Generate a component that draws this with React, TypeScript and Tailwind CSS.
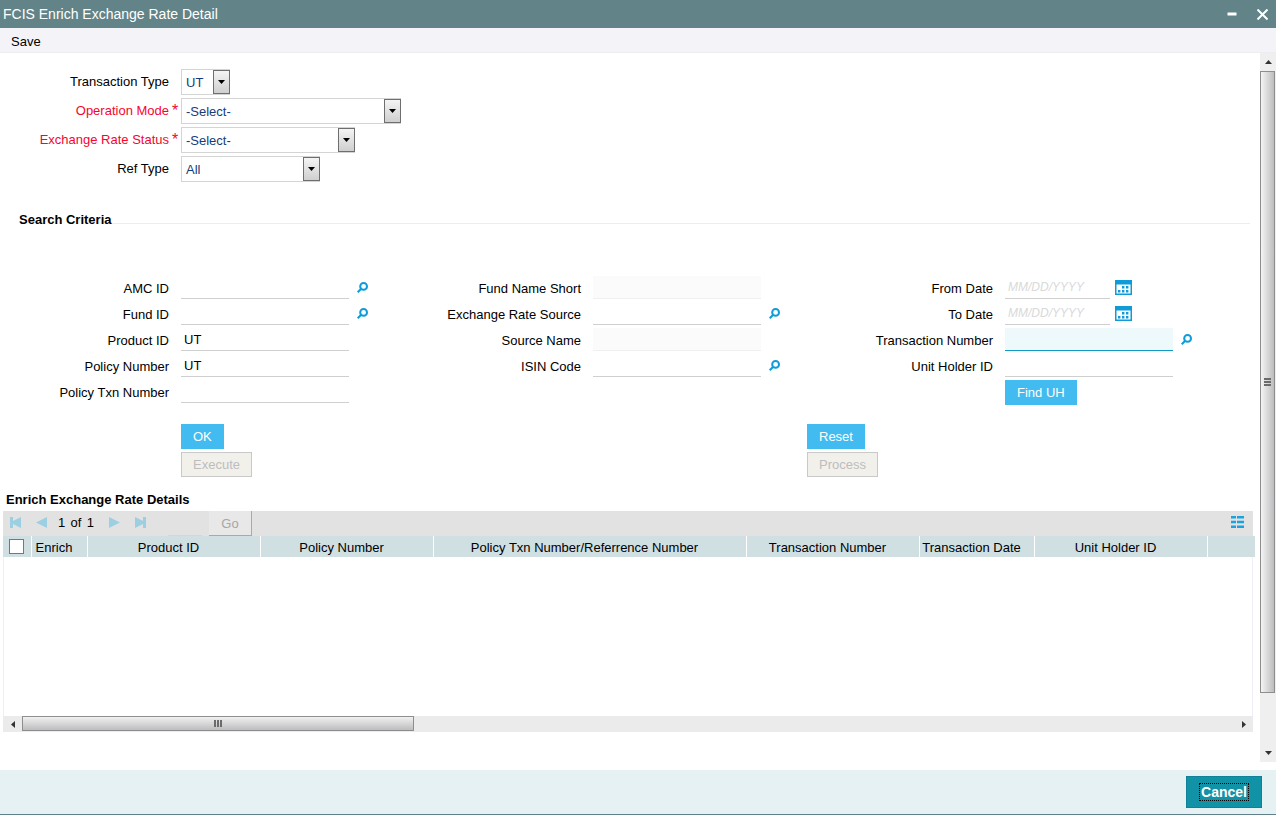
import { useState } from "react";
import clsx from "clsx";

type FieldProps = {
  id: string;
  label: string;
  value?: string;
  lookup?: boolean;
  readOnly?: boolean;
  active?: boolean;
};

const columns = [
  { title: "Enrich", width: "w-[56px]" },
  { title: "Product ID", width: "w-[173px]" },
  { title: "Policy Number", width: "w-[173px]" },
  { title: "Policy Txn Number/Referrence Number", width: "w-[313px]" },
  { title: "Transaction Number", width: "w-[173px]" },
  { title: "Transaction Date", width: "w-[115px]" },
  { title: "Unit Holder ID", width: "w-[173px]" },
];

function SearchIcon() {
  return (
    <svg width="11" height="11" viewBox="0 0 11 11" fill="none" stroke="#0f9bd7" strokeWidth="2">
      <circle cx="6.6" cy="4.4" r="3.4" />
      <path d="M4.2 6.8 0.700 10.300" />
    </svg>
  );
}

function CalendarIcon() {
  return (
    <svg width="17" height="15" viewBox="0 0 17 15" fill="#0f9bd7">
      <path d="M0 0h17v15H0z M1.5 4.5v9h14v-9z" fillRule="evenodd" />
      <path d="M7 6h2.400v2.500H7z M11 6h2.400v2.500H11z M3 10h2.400v2.500H3z M7 10h2.400v2.500H7z M11 10h2.400v2.500H11z" />
    </svg>
  );
}

function SelectRow({
  id,
  label,
  options,
  width,
  required,
}: {
  id: string;
  label: string;
  options: string[];
  width: string;
  required?: boolean;
}) {
  return (
    <div className="flex h-[26px] items-center">
      <label
        htmlFor={id}
        className={clsx("w-[169px] text-right", required && "text-[#f5052f]")}
      >
        {label}
      </label>
      <span className="w-3 pl-[3px] text-base leading-5 text-[#f5052f]">{required && "*"}</span>
      <div className={clsx("relative h-[26px]", width)}>
        <select
          id={id}
          className="h-full w-full appearance-none border border-[#d4d4d4] bg-white pt-px pl-1 text-[#163d7a] outline-none"
        >
          {options.map((o) => (
            <option key={o}>{o}</option>
          ))}
        </select>
        <span className="pointer-events-none absolute top-px right-0 flex h-6 w-[17px] items-center justify-center border border-[#6e6e6e] bg-linear-to-b from-[#f4f4f4] to-[#cfcfcf]">
          <svg width="7" height="4" viewBox="0 0 7 4">
            <path d="M0 0h7L3.5 4z" />
          </svg>
        </span>
      </div>
    </div>
  );
}

function Field({ id, label, value = "", lookup, readOnly, active }: FieldProps) {
  const [text, setText] = useState(value);
  return (
    <div className="flex h-[23px] items-center">
      <label htmlFor={id} className="mr-3 w-[169px] pt-[2px] text-right">
        {label}
      </label>
      <input
        id={id}
        type="text"
        value={text}
        readOnly={readOnly}
        onChange={(e) => setText(e.target.value)}
        className={clsx(
          "h-[23px] w-[168px] border-b px-[3px] outline-none",
          readOnly && "border-[#f0f0f0] bg-[#fbfbfb]",
          active && "border-[#1399c6] bg-[#edf9fa]",
          !readOnly && !active && "border-[#cfcfcf]"
        )}
      />
      {lookup && (
        <button type="button" aria-label={`Find ${label}`} className="ml-2">
          <SearchIcon />
        </button>
      )}
    </div>
  );
}

function DateField({ id, label }: { id: string; label: string }) {
  return (
    <div className="flex h-[23px] items-center">
      <label htmlFor={id} className="mr-3 w-[169px] pt-[2px] text-right">
        {label}
      </label>
      <input
        id={id}
        type="text"
        placeholder="MM/DD/YYYY"
        className="h-[23px] w-[105px] border-b border-[#cfcfcf] px-[3px] text-xs outline-none placeholder:text-[#d9d9d9] placeholder:italic"
      />
      <button type="button" aria-label={`Pick ${label}`} className="ml-[5px]">
        <CalendarIcon />
      </button>
    </div>
  );
}

function ActionButton({ text, disabled }: { text: string; disabled?: boolean }) {
  return (
    <button
      type="button"
      disabled={disabled}
      className={clsx(
        "h-[25px] border px-[11px]",
        disabled
          ? "border-[#c9c9c9] bg-[#f2f0eb] text-[#bdbdbd]"
          : "border-[#42bbf0] bg-[#42bbf0] text-white"
      )}
    >
      {text}
    </button>
  );
}

function PagerButton({ label, d }: { label: string; d: string }) {
  return (
    <button type="button" disabled aria-label={label}>
      <svg width="11" height="11" viewBox="0 0 11 11" fill="#9ccfe2">
        <path d={d} />
      </svg>
    </button>
  );
}

function Pager() {
  return (
    <div className="mr-[2px] flex h-[25px] items-center bg-[#e2e2e2] pl-[7px]">
      <div className="flex items-center gap-[15px] pb-[2px]">
        <PagerButton label="First page" d="M0 0h3v4L11 0v11L3 7v4H0z" />
        <PagerButton label="Previous page" d="M11 0v11L0 5.5z" />
      </div>
      <div className="mx-[11px] flex w-9 justify-between pb-px">
        <span>1</span>
        <span>of</span>
        <span>1</span>
      </div>
      <div className="flex items-center gap-[15px] pb-[2px] pl-[4px]">
        <PagerButton label="Next page" d="M0 0v11l11-5.5z" />
        <PagerButton label="Last page" d="M11 0H8v4L0 0v11l8-4v4h3z" />
      </div>
      <input
        type="text"
        disabled
        aria-label="Go to page"
        className="ml-[22px] h-6 w-[34px] border-b border-[#d6d6d6]"
      />
      <button
        type="button"
        disabled
        className="ml-[7px] h-[25px] w-[43px] border-r border-b border-[#a9a9a9] bg-[#e8e8e8] pt-px text-[#a6a6a6]"
      >
        Go
      </button>
      <button type="button" aria-label="Column options" className="mr-2 ml-auto pb-[3px]">
        <svg width="14" height="12" viewBox="0 0 14 12" fill="#1aa3e0">
          <path d="M0 0h5v2.500h-5z M6 0h7v2.500h-7z M0 4.700h5v2.500h-5z M6 4.700h7v2.500h-7z M0 9.400h5v2.500h-5z M6 9.400h7v2.500h-7z" />
        </svg>
      </button>
    </div>
  );
}

function DetailsTable() {
  return (
    <table className="w-full table-fixed border-collapse">
      <thead>
        <tr className="h-[21px] bg-[#cfdfe2]">
          <th className="w-[28px] border-r border-white p-0 text-left">
            <input
              type="checkbox"
              aria-label="Select all rows"
              className="ml-[6px] block h-[15px] w-[15px] appearance-none rounded-none border border-solid border-[#0a9bdc] bg-white checked:bg-[#0a9bdc]"
            />
          </th>
          {columns.map((c) => (
            <th
              key={c.title}
              className={clsx(
                "border-r border-white pt-[2px] pr-[10px] pb-0 pl-0 leading-[19px] font-normal whitespace-nowrap",
                c.width
              )}
            >
              {c.title}
            </th>
          ))}
          <th className="p-0" />
        </tr>
      </thead>
      <tbody />
    </table>
  );
}

function HorizontalScroll() {
  return (
    <div className="mr-[2px] flex h-4 bg-[#ebebeb]">
      <button type="button" aria-label="Scroll left" className="flex w-[19px] items-center justify-center">
        <svg width="4" height="7" viewBox="0 0 4 7" fill="#333">
          <path d="M4 0v7L0 3.500z" />
        </svg>
      </button>
      <div className="flex h-[15px] w-[392px] items-center justify-center gap-px border border-[#8e8e8e] bg-linear-to-b from-[#f1f1f1] to-[#bdbdbf]">
        <span className="h-[7px] w-[2px] bg-[#6b6b6b]" />
        <span className="h-[7px] w-[2px] bg-[#6b6b6b]" />
        <span className="h-[7px] w-[2px] bg-[#6b6b6b]" />
      </div>
      <button type="button" aria-label="Scroll right" className="ml-auto flex w-[19px] items-center justify-center">
        <svg width="4" height="7" viewBox="0 0 4 7" fill="#333">
          <path d="M0 0v7l4-3.500z" />
        </svg>
      </button>
    </div>
  );
}

function VerticalScroll() {
  return (
    <div className="flex w-4 shrink-0 flex-col bg-[#efeff0]">
      <button type="button" aria-label="Scroll up" className="flex h-[18px] items-center justify-center">
        <svg width="7" height="4" viewBox="0 0 7 4" fill="#333">
          <path d="M0 4h7L3.500 0z" />
        </svg>
      </button>
      <div className="flex w-[15px] grow flex-col items-center justify-center gap-px border border-[#8e8e8e] bg-linear-to-r from-[#f5f5f5] to-[#bdbdbf]">
        <span className="h-[2px] w-[7px] bg-[#6b6b6b]" />
        <span className="h-[2px] w-[7px] bg-[#6b6b6b]" />
        <span className="h-[2px] w-[7px] bg-[#6b6b6b]" />
      </div>
      <button type="button" aria-label="Scroll down" className="flex h-[69px] items-end justify-center pb-[7px]">
        <svg width="7" height="4" viewBox="0 0 7 4" fill="#333">
          <path d="M0 0h7L3.500 4z" />
        </svg>
      </button>
    </div>
  );
}

export default function App() {
  return (
    <div className="flex min-h-screen flex-col bg-white font-['Liberation_Sans',Arial,sans-serif] text-[13px] leading-5 text-black">
      <header className="flex h-7 items-center bg-[#628387] pr-2 pl-[3px] text-white">
        <h1 className="grow text-sm">FCIS Enrich Exchange Rate Detail</h1>
        <button type="button" aria-label="Minimize" className="mr-5">
          <svg width="10" height="10" viewBox="0 0 10 10" fill="white">
            <path d="M0.500 3.500h9v3h-9z" />
          </svg>
        </button>
        <button type="button" aria-label="Close">
          <svg width="11" height="11" viewBox="0 0 11 11" stroke="white" strokeWidth="2">
            <path d="M0.500 0.500l10 10M10.500 0.500l-10 10" />
          </svg>
        </button>
      </header>

      <nav className="flex h-[25px] items-center border-b border-[#ececf1] bg-[#f4f3f8] pt-[3px] pl-[11px]">
        <button type="button">Save</button>
      </nav>

      <div className="flex grow">
        <main className="flex min-w-0 grow flex-col pb-[30px]">
          <div className="flex flex-col gap-[3px] pt-4">
            <SelectRow id="txnType" label="Transaction Type" options={["UT"]} width="w-[49px]" />
            <SelectRow id="opMode" label="Operation Mode" options={["-Select-"]} width="w-[220px]" required />
            <SelectRow id="rateStatus" label="Exchange Rate Status" options={["-Select-"]} width="w-[174px]" required />
            <SelectRow id="refType" label="Ref Type" options={["All"]} width="w-[139px]" />
          </div>

          <div className="mt-7 flex h-5 pr-[10px] pl-[19px]">
            <h2 className="font-bold">Search Criteria</h2>
            <div className="h-[14px] grow border-b border-[#ededed]" />
          </div>

          <div className="mt-[46px] grid grid-cols-3 pr-6">
            <div className="flex flex-col gap-[3px]">
              <Field id="amcId" label="AMC ID" lookup />
              <Field id="fundId" label="Fund ID" lookup />
              <Field id="productId" label="Product ID" value="UT" />
              <Field id="policyNo" label="Policy Number" value="UT" />
              <Field id="policyTxnNo" label="Policy Txn Number" />
            </div>
            <div className="flex flex-col gap-[3px]">
              <Field id="fundName" label="Fund Name Short" readOnly />
              <Field id="rateSource" label="Exchange Rate Source" lookup />
              <Field id="sourceName" label="Source Name" readOnly />
              <Field id="isin" label="ISIN Code" lookup />
            </div>
            <div className="flex flex-col gap-[3px]">
              <DateField id="fromDate" label="From Date" />
              <DateField id="toDate" label="To Date" />
              <Field id="txnNo" label="Transaction Number" lookup active />
              <Field id="unitHolder" label="Unit Holder ID" />
              <div className="pl-[181px]">
                <ActionButton text="Find UH" />
              </div>
            </div>
          </div>

          <div className="mt-[19px] grid grid-cols-2 pr-2">
            <div className="flex flex-col items-start gap-[3px] pl-[181px]">
              <ActionButton text="OK" />
              <ActionButton text="Execute" disabled />
            </div>
            <div className="flex flex-col items-start gap-[3px] pl-[181px]">
              <ActionButton text="Reset" />
              <ActionButton text="Process" disabled />
            </div>
          </div>

          <h2 className="mt-[13px] mb-px pl-[6px] font-bold">Enrich Exchange Rate Details</h2>
          <section className="mr-[5px] ml-[3px] flex grow flex-col">
            <Pager />
            <DetailsTable />
            <div className="mr-[2px] min-h-24 grow border-x border-[#f0eff7]" />
            <HorizontalScroll />
          </section>
        </main>
        <VerticalScroll />
      </div>

      <footer className="mt-2 flex h-[45px] items-center justify-end border-b border-[#5f7f8a] bg-[#e5f1f3] pr-[14px]">
        <button
          type="button"
          className="flex h-8 w-[76px] items-center justify-center border border-[#0f8299] bg-[#1192a7] text-sm font-bold text-white"
        >
          <span className="border border-dotted border-black px-px leading-4">Cancel</span>
        </button>
      </footer>
    </div>
  );
}
